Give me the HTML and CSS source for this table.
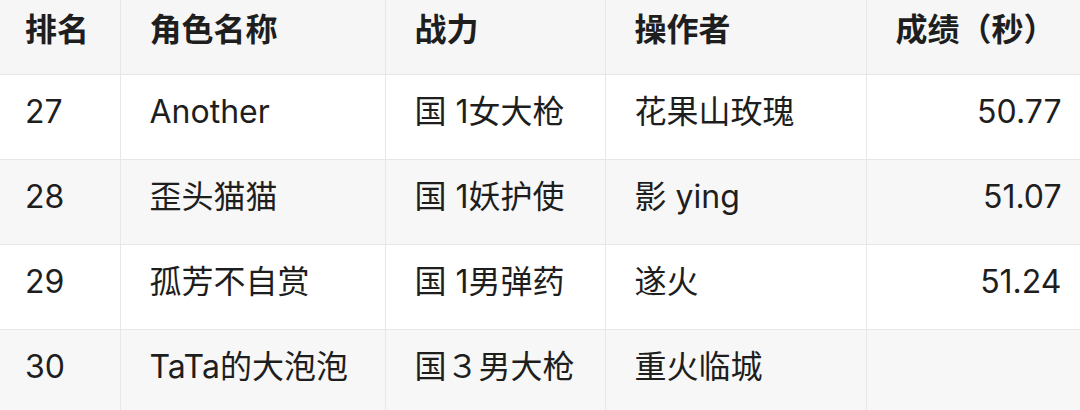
FILE: index.html
```html
<!DOCTYPE html>
<html lang="zh-CN">
<head>
<meta charset="utf-8">
<link rel="stylesheet" href="styles.css">
</head>
<body>
<table class="rank">
  <colgroup>
    <col class="c1"><col class="c2"><col class="c3"><col class="c4"><col class="c5">
  </colgroup>
  <thead>
    <tr><th class="first">排名</th><th>角色名称</th><th>战力</th><th>操作者</th><th class="num">成绩（秒）</th></tr>
  </thead>
  <tbody>
    <tr><td class="first">27</td><td>Another</td><td>国 1女大枪</td><td>花果山玫瑰</td><td class="num">50.77</td></tr>
    <tr class="alt"><td class="first">28</td><td>歪头猫猫</td><td>国 1妖护使</td><td>影 ying</td><td class="num">51.07</td></tr>
    <tr><td class="first">29</td><td>孤芳不自赏</td><td>国 1男弹药</td><td>遂火</td><td class="num">51.24</td></tr>
    <tr class="alt"><td class="first">30</td><td>TaTa的大泡泡</td><td>国３男大枪</td><td>重火临城</td><td class="num"></td></tr>
  </tbody>
</table>
</body>
</html>
```
FILE: styles.css
```css
html, body {
  margin: 0;
  padding: 0;
  background: #ffffff;
}
body {
  width: 1080px;
  height: 410px;
  overflow: hidden;
  font-family: Inter, "Noto Sans CJK SC", sans-serif;
  color: #1e1e1e;
}
.rank {
  border-collapse: collapse;
  table-layout: fixed;
  width: 1100px;
  font-size: 32px;
}
.c1 { width: 120px; }
.c2 { width: 265px; }
.c3 { width: 220px; }
.c4 { width: 261px; }
.c5 { width: 234px; }
.rank th, .rank td {
  border: 1px solid #e7e7e7;
  padding: 0 0 10px 29px;
  text-align: left;
  vertical-align: middle;
  white-space: nowrap;
  line-height: 40px;
}
.rank th {
  height: 60px;
  padding-bottom: 14px;
  background: #f6f6f6;
  font-weight: 700;
  border-top: none;
}
.rank td {
  height: 74px;
  background: #ffffff;
}
.rank tr.alt td {
  background: #f7f7f7;
}
.rank .first {
  padding-left: 25px;
  border-left: none;
}
.rank .num {
  text-align: right;
  padding-left: 0;
  padding-right: 38px;
}
.rank th.num {
  text-align: left;
  padding-left: 29px;
  padding-right: 0;
}
```
